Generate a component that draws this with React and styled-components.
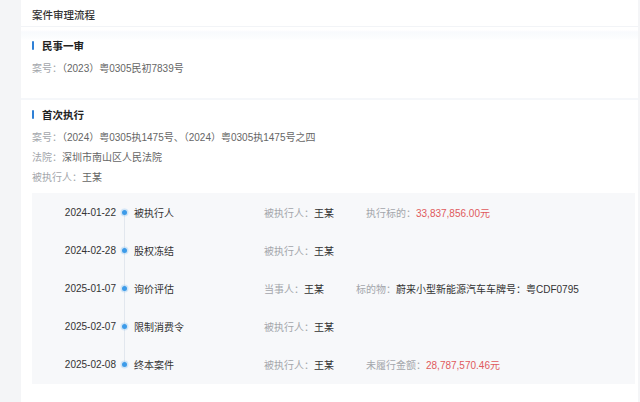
import React from 'react'
import styled, { createGlobalStyle } from 'styled-components'

const GlobalStyle = createGlobalStyle`
  html, body {
    margin: 0;
    padding: 0;
    background: #f4f5f7;
  }
  body {
    font-family: "Liberation Sans", "Noto Sans CJK SC", sans-serif;
    font-size: 10px;
    color: #333;
  }
`

const records = [
  { date: '2024-01-22', name: '被执行人', fields: [
    { label: '被执行人：', value: '王某' },
    { label: '执行标的：', value: '33,837,856.00元', red: true },
  ] },
  { date: '2024-02-28', name: '股权冻结', fields: [
    { label: '被执行人：', value: '王某' },
  ] },
  { date: '2025-01-07', name: '询价评估', fields: [
    { label: '当事人：', value: '王某' },
    { label: '标的物：', value: '蔚来小型新能源汽车车牌号：粤CDF0795' },
  ] },
  { date: '2025-02-07', name: '限制消费令', fields: [
    { label: '被执行人：', value: '王某' },
  ] },
  { date: '2025-02-08', name: '终本案件', fields: [
    { label: '被执行人：', value: '王某' },
    { label: '未履行金额：', value: '28,787,570.46元', red: true },
  ] },
]

function App() {
  return (
    <>
      <GlobalStyle />
      <Card>
        <Header>案件审理流程</Header>

        <Section $top={11} $bottom={19} $band>
          <SectionTitle>民事一审</SectionTitle>
          <InfoList>
            <InfoLine><Label>案号：</Label><Value>（2023）粤0305民初7839号</Value></InfoLine>
          </InfoList>
        </Section>

        <Section $top={7} $bottom={18} $divider>
          <SectionTitle>首次执行</SectionTitle>
          <InfoList>
            <InfoLine><Label>案号：</Label><Value>（2024）粤0305执1475号、（2024）粤0305执1475号之四</Value></InfoLine>
            <InfoLine><Label>法院：</Label><Value>深圳市南山区人民法院</Value></InfoLine>
            <InfoLine><Label>被执行人：</Label><Value>王某</Value></InfoLine>
          </InfoList>

          <Timeline>
            {records.map((r, i) => (
              <Row key={r.date + r.name}>
                <DateCol>{r.date}</DateCol>
                <DotCol $first={i === 0} $last={i === records.length - 1}>
                  <Dot />
                </DotCol>
                <EventName>{r.name}</EventName>
                <Fields>
                  {r.fields.map((f) => (
                    <Field key={f.label}>
                      <FieldLabel>{f.label}</FieldLabel>
                      <FieldValue $red={f.red}>{f.value}</FieldValue>
                    </Field>
                  ))}
                </Fields>
              </Row>
            ))}
          </Timeline>
        </Section>
      </Card>
    </>
  )
}

const Card = styled.div`
  margin-left: 21px;
  margin-right: 2px;
  min-height: 402px;
  background: #fff;
`

const Header = styled.div`
  height: 26px;
  line-height: 31px;
  padding: 0 11px;
  font-size: 10.5px;
  font-weight: 500;
  color: #333;
  border-bottom: 1px solid #f2f4f7;
`

const Section = styled.div`
  padding: ${(p) => p.$top}px 3px ${(p) => p.$bottom}px 11px;
  background: ${(p) => (p.$band
    ? 'linear-gradient(to bottom, #fff 0, #fff 3px, #f8fafd 5px, #fcfdfe 11px, #fff 13px)'
    : '#fff')};
  border-top: ${(p) => (p.$divider ? '2px solid #f5f7fa' : 'none')};
`

const SectionTitle = styled.div`
  display: flex;
  align-items: center;
  height: 14px;
  font-size: 10.5px;
  font-weight: 700;
  color: #222;

  &::before {
    content: '';
    width: 2px;
    height: 9px;
    margin-right: 8px;
    border-radius: 1px;
    background: #2f80d6;
  }
`

const InfoList = styled.div`
  margin-top: 7px;
`

const InfoLine = styled.div`
  height: 20px;
  line-height: 20px;
  font-size: 10px;
  white-space: nowrap;
`

const Label = styled.span`
  color: #a3a6ab;
`

const Value = styled.span`
  color: #666;
`

const Timeline = styled.div`
  margin-top: 5px;
  padding-bottom: 1px;
  background: #f7f8fa;
`

const Row = styled.div`
  display: flex;
  align-items: center;
  height: 38px;
  font-size: 10px;
  white-space: nowrap;
`

const DateCol = styled.div`
  width: 84px;
  text-align: right;
  color: #333;
  font-weight: 500;
`

const DotCol = styled.div`
  position: relative;
  align-self: stretch;
  width: 16px;
  display: flex;
  align-items: center;
  justify-content: center;

  &::before {
    content: '';
    position: absolute;
    left: 7.5px;
    width: 1px;
    top: ${(p) => (p.$first ? '50%' : '0')};
    bottom: ${(p) => (p.$last ? '50%' : '0')};
    background: #e2e7ee;
  }
`

const Dot = styled.span`
  position: relative;
  width: 5px;
  height: 5px;
  border-radius: 50%;
  background: #3d9be9;
  box-shadow: 0 0 0 1.5px rgba(61, 155, 233, 0.2);
`

const EventName = styled.div`
  width: 130px;
  padding-left: 2px;
  color: #333;
`

const Fields = styled.div`
  display: flex;
  gap: 32px;
`

const Field = styled.div``

const FieldLabel = styled.span`
  color: #a3a6ab;
`

const FieldValue = styled.span`
  color: ${(p) => (p.$red ? '#e05a5c' : '#333')};
`

export default App
